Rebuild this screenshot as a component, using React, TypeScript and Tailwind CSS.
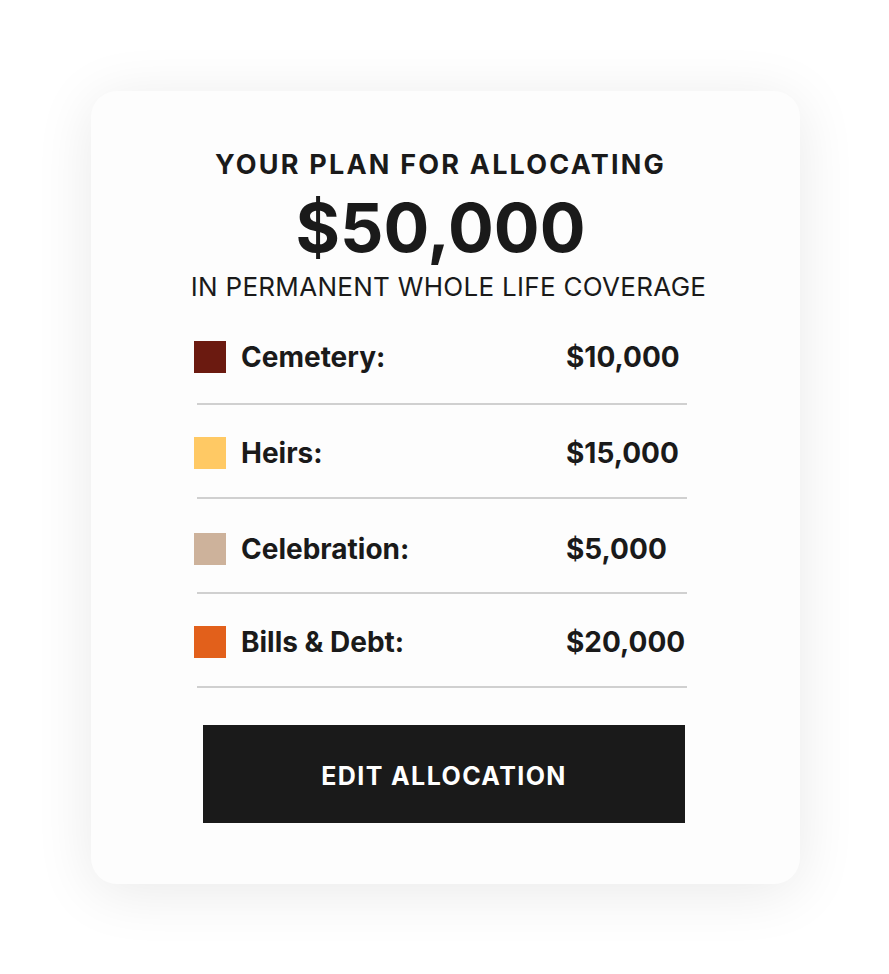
import React from "react";

const rows = [
  { label: "Cemetery:", amount: "$10,000", color: "bg-[#6b1a10]", pt: "pt-0", pb: "pb-[30px]" },
  { label: "Heirs:", amount: "$15,000", color: "bg-[#ffc964]", pt: "pt-[32px]", pb: "pb-[28px]" },
  { label: "Celebration:", amount: "$5,000", color: "bg-[#cdb29b]", pt: "pt-[34px]", pb: "pb-[27px]" },
  { label: "Bills & Debt:", amount: "$20,000", color: "bg-[#e2601b]", pt: "pt-[32px]", pb: "pb-[28px]" },
];

export default function App() {
  return (
    <div className="min-h-[974px] w-[889px] bg-white pt-[91px] pl-[91px]">
      <div
        className="w-[709px] h-[793px] rounded-[26px] bg-[#fdfdfd] shadow-[0_8px_60px_rgba(0,0,0,0.09)] pt-[59px] flex flex-col"
        style={{ fontFamily: "Inter, 'Liberation Sans', sans-serif" }}
      >
        <div className="flex flex-col items-center text-[#1a1a1a] pr-[10px]">
          <div className="text-[27px] leading-[30px] font-bold tracking-[2.2px]">YOUR PLAN FOR ALLOCATING</div>
          <div className="text-[68px] leading-[72px] font-bold mt-[11px]">$50,000</div>
          <div className="text-[26px] leading-[30px] font-normal tracking-[0.3px] mt-[9px] pl-[16px]">IN PERMANENT WHOLE LIFE COVERAGE</div>
        </div>
        <div className="ml-[103px] w-[493px] mt-[39px]">
          {rows.map((r, i) => (
            <div key={i} className={`${r.pt} flex flex-col`}>
              <div className={`flex items-center h-[32px] ${r.pb} box-content`}>
                <div className={`w-[32px] h-[32px] shrink-0 ${r.color}`} />
                <div className="ml-[15px] text-[28px] font-bold text-[#1a1a1a] leading-[32px]">{r.label}</div>
                <div className="ml-auto w-[121px] text-[28px] font-bold text-[#1a1a1a] leading-[32px]">{r.amount}</div>
              </div>
              <div className="ml-[3px] h-[2px] bg-[#d0d0d0]" />
            </div>
          ))}
        </div>
        <div className="ml-[112px] mt-[37px] w-[482px] h-[98px] pt-[6px] bg-[#1a1a1a] flex items-center justify-center text-white text-[25px] font-bold tracking-[1.4px]">
          EDIT ALLOCATION
        </div>
      </div>
    </div>
  );
}
